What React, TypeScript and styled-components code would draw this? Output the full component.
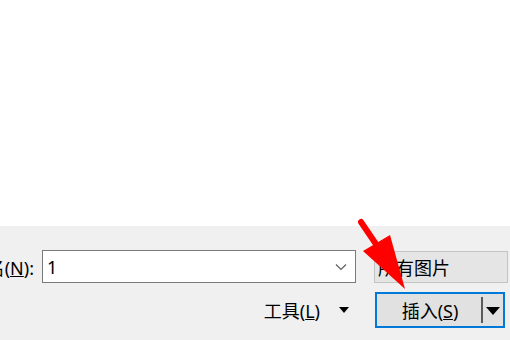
import React from 'react';
import styled, { createGlobalStyle } from 'styled-components';

const GlobalStyle = createGlobalStyle`
  html, body {
    margin: 0;
    padding: 0;
    background: #ffffff;
  }
  body {
    font-family: "Noto Sans", "Noto Sans CJK SC", sans-serif;
    font-size: 18px;
    color: #000000;
  }
`;

const App = () => {
  return (
    <>
      <GlobalStyle />
      <Page>
        <Blank />
        <Panel>
          <Row>
            <LabelBox>
              <span>
                文件名(<u>N</u>):
              </span>
            </LabelBox>
            <NameInput>
              <span>1</span>
              <Chevron viewBox="0 0 12 8">
                <path d="M1 1.5 L6 6.5 L11 1.5" fill="none" stroke="#606060" strokeWidth="1.2" />
              </Chevron>
            </NameInput>
            <FilterBox>所有图片</FilterBox>
          </Row>
          <ActionRow>
            <Tools>
              <span>
                工具(<u>L</u>)
              </span>
              <Caret $w={11} $h={6} />
            </Tools>
            <SplitButton>
              <MainPart>
                插入(<u>S</u>)
              </MainPart>
              <Divider />
              <DropPart>
                <Caret $w={15} $h={8} />
              </DropPart>
            </SplitButton>
          </ActionRow>
        </Panel>
        <Arrow viewBox="0 0 510 340">
          <line x1="361" y1="222" x2="380" y2="250" stroke="#ff0000" strokeWidth="6" strokeLinecap="round" />
          <polygon points="405,289 363,251 390,235" fill="#ff0000" />
        </Arrow>
      </Page>
    </>
  );
};

export default App;

const Page = styled.div`
  position: relative;
  width: 510px;
  height: 340px;
  display: flex;
  flex-direction: column;
  overflow: hidden;
`;

const Blank = styled.div`
  flex: 0 0 226px;
  background: #ffffff;
`;

const Panel = styled.div`
  flex: 1;
  background: #f0f0f0;
  padding-top: 24px;
`;

const Row = styled.div`
  display: flex;
  align-items: center;
  height: 33px;
`;

const LabelBox = styled.div`
  width: 34px;
  margin-right: 8px;
  display: flex;
  justify-content: flex-end;
  white-space: nowrap;
`;

const NameInput = styled.div`
  box-sizing: border-box;
  width: 314px;
  height: 33px;
  background: #ffffff;
  border: 1px solid #7a7a7a;
  display: flex;
  align-items: center;
  justify-content: space-between;
  padding: 0 8px 0 4px;
`;

const Chevron = styled.svg`
  width: 12px;
  height: 8px;
`;

const FilterBox = styled.div`
  box-sizing: border-box;
  margin-left: 18px;
  width: 134px;
  height: 32px;
  background: #e5e5e5;
  border: 1px solid #c4c4c4;
  display: flex;
  align-items: center;
  padding-left: 3px;
  white-space: nowrap;
`;

const ActionRow = styled.div`
  display: flex;
  align-items: center;
  justify-content: flex-end;
  height: 36px;
  margin-top: 9px;
  padding-right: 5px;
`;

const Tools = styled.div`
  display: flex;
  align-items: center;
  gap: 19px;
  margin-right: 26px;
`;

const Caret = styled.span<{ $w: number; $h: number }>`
  width: 0;
  height: 0;
  border-left: ${(p) => p.$w / 2}px solid transparent;
  border-right: ${(p) => p.$w / 2}px solid transparent;
  border-top: ${(p) => p.$h}px solid #000000;
`;

const SplitButton = styled.div`
  box-sizing: border-box;
  width: 130px;
  height: 36px;
  background: #e1e1e1;
  border: 2px solid #0078d7;
  display: flex;
  align-items: center;
`;

const MainPart = styled.div`
  flex: 1;
  text-align: center;
  padding-left: 2px;
`;

const Divider = styled.div`
  width: 2px;
  height: 26px;
  background: #5a5a5a;
`;

const DropPart = styled.div`
  width: 20px;
  display: flex;
  justify-content: center;
  padding-top: 1px;
`;

const Arrow = styled.svg`
  position: absolute;
  left: 0;
  top: 0;
  width: 510px;
  height: 340px;
  pointer-events: none;
`;
